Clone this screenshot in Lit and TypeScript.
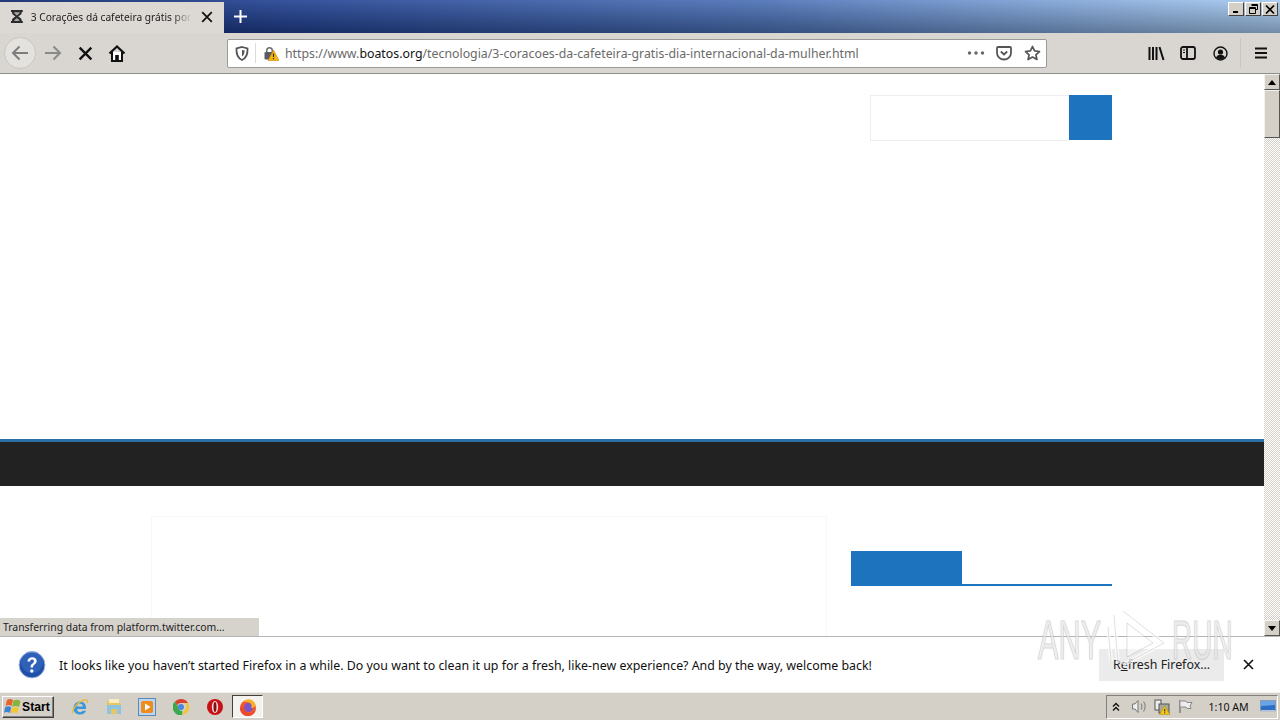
import { LitElement, html, css } from "lit";
import { customElement } from "lit/decorators.js";

@customElement("app-root")
export class AppRoot extends LitElement {
  static styles = css`
    :host { display: block; width: 1280px; height: 720px; overflow: hidden; position: relative; font-family: "Noto Sans", "Open Sans", sans-serif; background: #fff; }
    * { box-sizing: border-box; }
    svg { display: block; }
    .win { display: flex; flex-direction: column; height: 720px; }
    .titlebar { height: 33px; display: flex; flex: none; background: linear-gradient(to bottom, rgba(255,255,255,.1), rgba(0,0,0,.3)), linear-gradient(to right, #0a246a 0%, #1f3f90 22%, #4a70b6 60%, #a6caf0 100%); }
    .tab { width: 224px; margin-top: 2px; background: #dcd9d4; display: flex; align-items: center; padding: 0 10px 2px; font-size: 10.2px; color: #222; }
    .tab .ttl { margin-left: 7px; width: 164px; white-space: nowrap; overflow: hidden; -webkit-mask-image: linear-gradient(to right, #000 88%, transparent); mask-image: linear-gradient(to right, #000 88%, transparent); }
    .tab .x { margin-left: 8px; }
    .plus { width: 33px; display: flex; align-items: center; justify-content: center; }
    .winbtns { margin-left: auto; display: flex; gap: 1px; padding: 2px 2px 0 0; align-self: flex-start; }
    .wb { width: 16px; height: 14px; background: #d4d0c8; border: 1px solid; border-color: #fff #404040 #404040 #fff; display: flex; align-items: center; justify-content: center; }
    .nav { height: 41px; flex: none; background: #d9d6d1; border-bottom: 1px solid #8e8e8c; display: flex; align-items: center; padding-left: 4px; }
    .back { width: 32px; height: 32px; border-radius: 50%; background: #e4e2de; border: 1px solid #c9c6c1; display: flex; align-items: center; justify-content: center; }
    .ib { width: 32px; height: 32px; display: flex; align-items: center; justify-content: center; flex: none; }
    .fwd { margin-left: 1px; }
    .navleft { display: flex; align-items: center; width: 223px; }
    .urlbox { width: 820px; height: 29px; background: #fff; border: 1px solid #9a9a98; border-radius: 2px; display: flex; align-items: center; flex: none; }
    .urlbox .i1 { width: 27px; display: flex; justify-content: center; flex: none; }
    .sep { width: 1px; height: 20px; background: #dcdcdc; flex: none; }
    .lock { width: 29px; display: flex; justify-content: center; flex: none; }
    .addr { font-size: 12.34px; color: #6a6a6a; white-space: nowrap; width: 677px; flex: none; }
    .addr b { font-weight: 400; color: #111; }
    .ura { width: 28px; display: flex; justify-content: center; flex: none; }
    .navright { display: flex; align-items: center; margin-left: 93px; }
    .navsep { width: 1px; height: 30px; background: #c8c5c0; margin: 0 4px 0 4px; }
    .main { flex: 1; display: flex; min-height: 0; position: relative; }
    .page { flex: 1; background: #fff; overflow: hidden; display: flex; flex-direction: column; }
    .hdr { height: 365px; flex: none; display: flex; justify-content: flex-end; padding: 21px 152px 0 0; }
    .search { display: flex; width: 242px; height: 46px; }
    .search .inp { flex: 1; border: 1px solid #eeeeee; border-right: 0; }
    .search .go { width: 43px; height: 45px; background: #1e73be; }
    .menu { height: 47px; flex: none; background: #222; border-top: 3px solid #2a6fa8; }
    .content { display: flex; padding: 30px 152px 0 151px; gap: 24px; flex: 1; }
    .article { width: 676px; border: 1px solid #f8f8f8; border-bottom: 0; }
    .side { flex: 1; padding-top: 35px; }
    .widget { height: 35px; border-bottom: 2px solid #1e73be; }
    .widget div { width: 111px; height: 33px; background: #1e73be; }
    .sb { width: 16px; flex: none; display: flex; flex-direction: column; background: repeating-conic-gradient(#d4d0c8 0 25%, #fff 0 50%) 0 0 / 2px 2px; }
    .sbb { height: 16px; flex: none; background: #d4d0c8; border: 1px solid; border-color: #f4f2ee #555 #555 #f4f2ee; display: flex; align-items: center; justify-content: center; }
    .thumb { height: 48px; flex: none; background: #d4d0c8; border: 1px solid; border-color: #f4f2ee #555 #555 #f4f2ee; }
    .grow { flex: 1; }
    .status { position: absolute; left: 0; bottom: 0; width: 259px; height: 18px; background: #d6d3cd; font-size: 10.4px; color: #222; padding: 2px 0 0 3px; white-space: nowrap; }
    .notify { height: 56px; flex: none; background: #fff; border-top: 1px solid #b5b5b5; display: flex; align-items: center; padding: 0 24px 0 18px; }
    .msg { margin-left: 13px; padding-top: 1px; font-size: 12.38px; color: #111; white-space: nowrap; width: 1040px; }
    .refresh { width: 125px; height: 32px; background: #ebebeb; font-size: 12.4px; color: #222; display: flex; align-items: center; justify-content: center; flex: none; }
    .refresh u { text-decoration: underline; }
    .nclose { margin-left: 18px; }
    .task { height: 28px; flex: none; background: #d4d0c8; border-top: 1px solid #f2f0ec; display: flex; align-items: center; padding: 0 2px; }
    .start { width: 52px; height: 22px; background: #d4d0c8; border: 1px solid; border-color: #fff #404040 #404040 #fff; box-shadow: inset -1px -1px 0 #808080; display: flex; align-items: center; padding-left: 1px; font-size: 12.2px; font-weight: 700; color: #000; font-family: "Liberation Sans", sans-serif; }
    .ql { display: flex; align-items: center; margin-left: 9px; }
    .ti { width: 33.7px; height: 24px; display: flex; align-items: center; justify-content: center; flex: none; }
    .ti.on { width: 31px; height: 23px; background: #f3f2ef; border: 1px solid; border-color: #404040 #fff #fff #404040; margin-left: 1px; }
    .tray { margin-left: auto; width: 172px; height: 24px; border: 1px solid; border-color: #808080 #fff #fff #808080; display: flex; align-items: center; }
    .tray .t { width: 18px; display: flex; justify-content: center; flex: none; margin-right: 5px; }
    .clock { font-size: 10.6px; color: #111; margin-left: 9.500px; width: 50px; white-space: nowrap; }
    .trayicon { margin-left: 1px; }
    .mark { position: absolute; left: 1038px; top: 610px; display: flex; align-items: center; font-family: "Liberation Sans", sans-serif; font-size: 55px; line-height: 60px; color: rgba(255,255,255,.55); -webkit-text-stroke: 1px rgba(165,165,165,.35); text-shadow: 0 0 2px rgba(130,130,130,.35); pointer-events: none; }
    .mark .w { display: inline-block; transform: scaleX(.56); transform-origin: left center; white-space: nowrap; }
    .mark .run .w { transform: scaleX(.51); }
    .any { width: 69px; }
    .run { width: 62px; margin-left: 7px; }
    .play { margin-top: -6px; flex: none; }
  `;

  private x(size: number, color: string, w = 2) {
    return html`<svg width=${size} height=${size} viewBox="0 0 16 16"><path d="M2.500 2.500 13.500 13.500M13.500 2.500 2.500 13.500" stroke=${color} stroke-width=${w} fill="none"/></svg>`;
  }

  render() {
    return html`<div class="win">
      <div class="titlebar">
        <div class="tab">
          <svg width="14" height="15" viewBox="0 0 14 15"><path d="M1 1h12v2h-1c0 3-2.500 3.500-3.500 4.500 1 1 3.500 1.500 3.500 4.500h1v2H1v-2h1c0-3 2.500-3.500 3.500-4.500C4.500 6.500 2 6 2 3H1z" fill="#2b2b2b"/><path d="M4 3.200h6c-.3 1.500-2 2.300-3 3.300-1-1-2.700-1.800-3-3.300zM7 9c-1 .8-2.500 1.800-2.800 3.200h5.600C9.500 10.800 8 9.800 7 9z" fill="#aaa"/></svg>
          <div class="ttl">3 Corações dá cafeteira grátis por</div>
          <div class="x">${this.x(14, "#111")}</div>
        </div>
        <div class="plus"><svg width="15" height="15" viewBox="0 0 15 15"><path d="M7.500 1v13M1 7.500h13" stroke="#fff" stroke-width="2"/></svg></div>
        <div class="winbtns">
          <div class="wb"><svg width="10" height="9" viewBox="0 0 10 9"><path d="M2 7h5" stroke="#000" stroke-width="2"/></svg></div>
          <div class="wb"><svg width="11" height="10" viewBox="0 0 11 10"><path d="M3.500.5h6v5h-2M1.500 3.500h6v6h-6zM3.500 1.500h6M1.500 4.500h6" stroke="#000" fill="none"/></svg></div>
          <div class="wb"><svg width="10" height="9" viewBox="0 0 10 9"><path d="M1 .5 9 8.500M9 .5 1 8.500" stroke="#000" stroke-width="1.600"/></svg></div>
        </div>
      </div>
      <div class="nav">
        <div class="navleft">
          <div class="back"><svg width="18" height="16" viewBox="0 0 18 16"><path d="M17 8H2M8.500 1.500 2 8l6.500 6.500" stroke="#7d7d7b" stroke-width="2" fill="none"/></svg></div>
          <div class="ib fwd"><svg width="18" height="16" viewBox="0 0 18 16"><path d="M1 8h15M9.500 1.500 16 8l-6.500 6.500" stroke="#8a8a88" stroke-width="2" fill="none"/></svg></div>
          <div class="ib">${this.x(17, "#111", 2.200)}</div>
          <div class="ib"><svg width="18" height="17" viewBox="0 0 18 17"><path d="M4 7v9h10V7" fill="#fff" stroke="#111" stroke-width="2"/><path d="M1.500 8.500 9 1.500l7.500 7" stroke="#111" stroke-width="2.200" fill="none"/><rect x="7.200" y="10" width="3.600" height="6" fill="#111"/></svg></div>
        </div>
        <div class="urlbox">
          <div class="i1"><svg width="14" height="15" viewBox="0 0 14 15"><path d="M7 1 12.500 2.500c.3 5-1 9.500-5.500 11.500C2.500 12 1.200 7.500 1.500 2.500z" fill="none" stroke="#555" stroke-width="1.800"/><path d="M7 4v6.500c1.800-1 2.600-3.500 2.600-6z" fill="#555"/></svg></div>
          <div class="sep"></div>
          <div class="lock"><svg width="16" height="16" viewBox="0 0 16 16"><path d="M3 5.500a3.500 3.500 0 0 1 7 0V7H8.500V5.500a2 2 0 0 0-4 0V7H3z" fill="#6b6b75"/><rect x="1.500" y="7" width="10" height="7.500" rx="1" fill="#5a5a68"/><path d="M10.500 5 16 15.500H5z" fill="#f5b50f" stroke="#c98a00" stroke-width=".6"/><path d="M10.500 8.500v3.500M10.500 13v1.200" stroke="#3a2c00" stroke-width="1.200"/></svg></div>
          <div class="addr">https://www.<b>boatos.org</b>/tecnologia/3-coracoes-da-cafeteira-gratis-dia-internacional-da-mulher.html</div>
          <div class="ura"><svg width="18" height="4" viewBox="0 0 18 4"><circle cx="2.500" cy="2" r="1.700" fill="#666"/><circle cx="9" cy="2" r="1.700" fill="#666"/><circle cx="15.500" cy="2" r="1.700" fill="#666"/></svg></div>
          <div class="ura"><svg width="16" height="15" viewBox="0 0 16 15"><path d="M2 1h12c.6 0 1 .4 1 1v5c0 3.500-3.300 6.500-7 6.500S1 10.500 1 7V2c0-.6.400-1 1-1z" fill="none" stroke="#555" stroke-width="1.800"/><path d="M4.800 5.500 8 8.500l3.200-3" fill="none" stroke="#555" stroke-width="1.800"/></svg></div>
          <div class="ura"><svg width="17" height="16" viewBox="0 0 17 16"><path d="M8.500 1.500 10.600 5.900l4.900.6-3.600 3.300 1 4.700-4.400-2.400-4.400 2.400 1-4.700L1.500 6.500l4.900-.6z" fill="none" stroke="#555" stroke-width="1.700" stroke-linejoin="round"/></svg></div>
        </div>
        <div class="navright">
          <div class="ib"><svg width="17" height="15" viewBox="0 0 17 15"><path d="M1.500 1v13M5 1v13M8.500 1v13M11.500 1l4 13" stroke="#111" stroke-width="2"/></svg></div>
          <div class="ib"><svg width="16" height="14" viewBox="0 0 16 14"><rect x="1" y="1" width="14" height="12" rx="2" fill="none" stroke="#111" stroke-width="1.800"/><path d="M7 1v12" stroke="#111" stroke-width="1.800"/><path d="M3 4h2M3 6.500h2" stroke="#111"/></svg></div>
          <div class="ib"><svg width="15" height="15" viewBox="0 0 15 15"><circle cx="7.500" cy="7.500" r="6.500" fill="none" stroke="#111" stroke-width="1.400"/><circle cx="7.500" cy="6" r="2.600" fill="#111"/><path d="M3 11.500c1-2 2.600-2.700 4.500-2.700s3.500.7 4.500 2.700c-1.200 1-2.800 1.600-4.500 1.600S4.200 12.500 3 11.500z" fill="#111"/></svg></div>
          <div class="navsep"></div>
          <div class="ib"><svg width="14" height="12" viewBox="0 0 14 12"><path d="M1 1.500h12M1 6h12M1 10.500h12" stroke="#111" stroke-width="2"/></svg></div>
        </div>
      </div>
      <div class="main">
        <div class="page">
          <div class="hdr"><div class="search"><div class="inp"></div><div class="go"></div></div></div>
          <div class="menu"></div>
          <div class="content">
            <div class="article"></div>
            <div class="side"><div class="widget"><div></div></div></div>
          </div>
        </div>
        <div class="sb">
          <div class="sbb"><svg width="8" height="5" viewBox="0 0 8 5"><path d="M4 0 8 5H0z" fill="#000"/></svg></div>
          <div class="thumb"></div>
          <div class="grow"></div>
          <div class="sbb"><svg width="8" height="5" viewBox="0 0 8 5"><path d="M0 0h8L4 5z" fill="#000"/></svg></div>
        </div>
        <div class="status">Transferring data from platform.twitter.com...</div>
      </div>
      <div class="notify">
        <svg width="28" height="28" viewBox="0 0 28 28"><circle cx="14" cy="14" r="13" fill="#1f4fa8" stroke="#a9bcdc"/><circle cx="14" cy="11" r="11" fill="#3d71c6" opacity=".55"/><path d="M9.500 10.500c0-2.600 2-4.200 4.700-4.200s4.500 1.500 4.500 3.800c0 3.400-3.700 3.300-3.700 6.400h-2.500c0-4 3.500-4 3.500-6.200 0-1-.8-1.700-1.900-1.700-1.300 0-2 .8-2 1.900z" fill="#fff"/><circle cx="13.800" cy="20" r="1.700" fill="#fff"/></svg>
        <div class="msg">It looks like you haven’t started Firefox in a while. Do you want to clean it up for a fresh, like-new experience? And by the way, welcome back!</div>
        <div class="refresh"><span>R<u>e</u>fresh Firefox…</span></div>
        <div class="nclose">${this.x(13, "#111", 2)}</div>
      </div>
      <div class="task">
        <div class="start">
          <svg width="18" height="17" viewBox="0 0 18 17"><path d="M3 2c2-1.500 4-1.500 6 0L7.500 8C5.500 6.800 3.500 6.800 1.500 8z" fill="#e8622c"/><path d="M9.500 2.500c2.200-1 4.500-1 7 .5l-1.500 6c-2.500-1.500-4.800-1.500-7 0z" fill="#86b53e"/><path d="M1.200 9c2.200-1 4-1 6 .3L6 15c-2-1.300-3.800-1.300-6-.3z" fill="#3f84d4"/><path d="M7.800 10c2.400-1.300 4.700-1.300 7 0l-1.500 5.500c-2.400-1.300-4.500-1.300-6.700 0z" fill="#f4c534"/></svg>
          <span>Start</span>
        </div>
        <div class="ql">
          <div class="ti"><svg width="18" height="18" viewBox="0 0 18 18"><path d="M2.500 10.500C2.500 6.500 5 3.500 9 3.500s6.500 3 6 7.500H6c.2 2 1.400 3.200 3.200 3.200 1.200 0 2-.5 2.600-1.400h3.400C14.300 15 12 16.500 9 16.500c-4 0-6.500-2.500-6.500-6zM6.200 8.500h5.700C11.700 6.800 10.600 5.800 9 5.800S6.400 6.800 6.200 8.500z" fill="#3a97dc" fill-rule="evenodd"/><path d="M1.500 15.500C.5 12 6 4.500 12.500 2c3-1 4.500.2 3.500 3" fill="none" stroke="#eabb3c" stroke-width="1.400"/></svg></div>
          <div class="ti"><svg width="18" height="17" viewBox="0 0 18 17"><path d="M2 3h6l1.500 2H16v11H2z" fill="#e6c663"/><rect x="4" y="1" width="10" height="4" fill="#f7edc0"/><rect x="2" y="7" width="14" height="9" fill="#8fc4e0"/><rect x="6" y="11" width="6" height="5" fill="#e6c663"/></svg></div>
          <div class="ti"><svg width="18" height="18" viewBox="0 0 18 18"><rect x=".5" y=".5" width="17" height="17" fill="#bcd5ee" stroke="#5a8ab8"/><rect x="3" y="3" width="12" height="12" rx="2" fill="#f08a1d"/><path d="M7 5.500v7l5.500-3.500z" fill="#fff"/></svg></div>
          <div class="ti"><svg width="16" height="16" viewBox="0 0 16 16"><path d="M8 0a8 8 0 0 1 7 4H8a4 4 0 0 0-3.700 2.400L2 2.400A8 8 0 0 1 8 0z" fill="#d8402f"/><path d="M15 4a8 8 0 0 1-6 12l3.400-6A4 4 0 0 0 12 4z" fill="#f4c42e"/><path d="M9 16A8 8 0 0 1 2 2.400l3.500 6.100A4 4 0 0 0 9.500 12z" fill="#3ea84c"/><circle cx="8" cy="8" r="3" fill="#4a86e0"/></svg></div>
          <div class="ti"><svg width="16" height="16" viewBox="0 0 16 16"><circle cx="8" cy="8" r="8" fill="#c81016"/><ellipse cx="8" cy="8" rx="3.200" ry="6" fill="#f6dcdc"/><ellipse cx="8" cy="8" rx="1.500" ry="5" fill="#8e0b10"/></svg></div>
          <div class="ti on"><svg width="18" height="18" viewBox="0 0 18 18"><circle cx="9" cy="10" r="8" fill="#f2592c"/><circle cx="9.500" cy="9.500" r="4.500" fill="#7b55c8"/><path d="M4 2c.5 2 2.500 2 5 2.300 3.500.5 4.500 3.500 3 5.700 3 0 4.500-2 4.500-3.500C15.500 3 12 .8 9 1.200 7.500 1.400 6 2 5 3.500z" fill="#fbb124"/><path d="M1 10c0 4.500 3.500 8 8 8 3.500 0 7-2.500 8-7-2 4-6 5-9 3.500C5 13 5 9 4 8z" fill="#ec4a2c"/></svg></div>
        </div>
        <div class="tray">
          <div class="t"><svg width="8" height="10" viewBox="0 0 8 10"><path d="M1 4.500 4 1.500l3 3M1 8.500l3-3 3 3" fill="none" stroke="#111" stroke-width="1.400"/></svg></div>
          <div class="t"><svg width="17" height="15" viewBox="0 0 17 15"><path d="M1.500 5h2.500l3-3.500v12L4 10H1.500z" fill="#eee" stroke="#777"/><path d="M10 4.500c1.200 1.500 1.200 4.500 0 6M12.500 2.500c2.200 2.800 2.200 7.200 0 10" fill="none" stroke="#888" stroke-width="1.200"/></svg></div>
          <div class="t"><svg width="17" height="16" viewBox="0 0 17 16"><rect x="1" y="1" width="6" height="10" fill="#eee" stroke="#555"/><rect x="5" y="5" width="10" height="9" fill="#a8a89c" stroke="#555"/><path d="M10.500 7 16 15.500H5.500z" fill="#f5c518" stroke="#b58900" stroke-width=".5"/><path d="M10.700 10v2.500M10.700 13.300v1" stroke="#222"/></svg></div>
          <div class="t"><svg width="15" height="15" viewBox="0 0 15 15"><path d="M2 1v13" stroke="#777" stroke-width="1.400"/><path d="M2.500 2h5.500l1 1.500h5l-2 3.500 1 2.500H9L8 8H2.500" fill="#eee" stroke="#888"/></svg></div>
          <div class="clock">1:10 AM</div>
          <svg class="trayicon" width="16" height="13" viewBox="0 0 16 13"><rect x=".5" y=".5" width="15" height="10" fill="#2d6fc4" stroke="#8a9cb4"/><path d="M1 1h14v4L1 6z" fill="#6aa4e8"/><rect x="1" y="10" width="14" height="2" fill="#b8c4d4"/></svg>
        </div>
      </div>
      <div class="mark">
        <div class="any"><span class="w">ANY</span></div>
        <svg class="play" width="58" height="60" viewBox="0 0 58 60"><path d="M1 20 4 54M7 8 11 56M16 4 57 36 16 58" fill="none" stroke="rgba(255,255,255,.7)" stroke-width="4"/><path d="M1 20 4 54M7 8 11 56M16 4 57 36 16 58" fill="none" stroke="rgba(150,150,150,.3)" stroke-width="1"/><path d="M20 16 46 36 20 50z" fill="rgba(255,255,255,.45)" stroke="rgba(160,160,160,.35)"/></svg>
        <div class="run"><span class="w">RUN</span></div>
      </div>
    </div>`;
  }
}
